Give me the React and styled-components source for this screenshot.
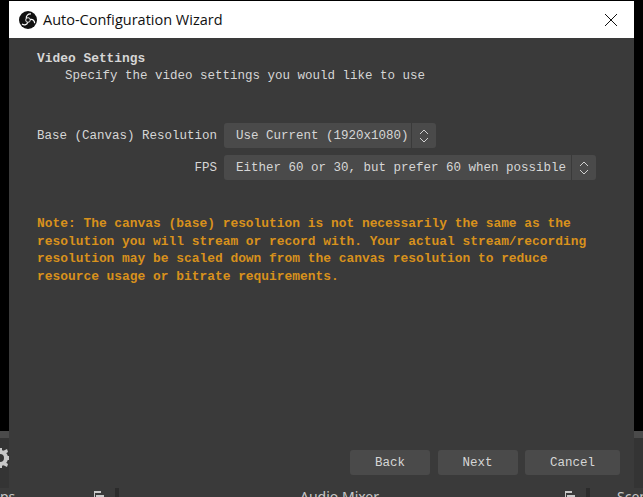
import styled, { createGlobalStyle } from "styled-components";

const Global = createGlobalStyle`
  html, body {
    margin: 0;
    padding: 0;
    background: #000;
  }
`;

const Screen = styled.div`
  position: relative;
  width: 643px;
  height: 497px;
  overflow: hidden;
  background: #000;
`;

// the main OBS window peeking out behind the wizard
const BackWindow = styled.div`
  position: absolute;
  left: 0;
  right: 0;
  top: 431px;
  bottom: 0;
  display: flex;
  flex-direction: column;
`;

const BackToolbar = styled.div`
  height: 57px;
  flex: none;
  background: linear-gradient(#4a4a4a 0 7px, #343434 7px);
  display: flex;
  align-items: center;
`;

const BackDocks = styled.div`
  flex: 1;
  display: flex;
  background: #3a3a3a;
  font: 14px "Noto Sans", sans-serif;
  color: #c8c8c8;
  line-height: 17px;
  white-space: nowrap;
`;

const Dock = styled.div`
  width: ${(p) => p.w}px;
  flex: none;
  display: flex;
  border-right: ${(p) => (p.last ? "none" : "4px solid #2b2b2b")};
  overflow: hidden;
  padding-left: ${(p) => p.pad || 0}px;
  box-sizing: border-box;
`;

const DockTitle = styled.span`
  flex: 1;
`;

const DockAction = styled.span`
  display: flex;
  align-items: flex-start;
  margin-right: 11px;
  margin-top: 3px;
`;

const GearSlot = styled.div`
  margin: 0 0 3px -11px;
  display: flex;
`;

const Window = styled.div`
  position: absolute;
  left: 9px;
  top: 1px;
  width: 625px;
  height: 487px;
  display: flex;
  flex-direction: column;
  background: #3a3a3a;
`;

const TitleBar = styled.div`
  height: 37px;
  flex: none;
  background: #fff;
  display: flex;
  align-items: center;
  padding: 0 0 0 10px;
  color: #111;
  font: 14.5px "Open Sans", sans-serif;
`;

const TitleText = styled.span`
  margin-left: 6px;
  flex: 1;
`;

const CloseButton = styled.div`
  width: 46px;
  height: 37px;
  display: flex;
  align-items: center;
  justify-content: center;
`;

const Body = styled.div`
  flex: 1;
  display: flex;
  flex-direction: column;
  padding: 12px 14px 14px 28px;
  color: #d6d6d6;
  font-family: "Liberation Mono", "DejaVu Sans Mono", monospace;
  font-size: 12.5px;
  line-height: 17px;
`;

const Heading = styled.div`
  font-weight: 700;
  font-size: 12.9px;
  height: 17px;
`;

const SubHeading = styled.div`
  margin-left: 28px;
  margin-top: 1px;
  height: 17px;
`;

const Form = styled.div`
  margin-top: 38px;
  display: grid;
  grid-template-columns: 180px auto;
  column-gap: 7px;
  row-gap: 7px;
  justify-content: start;
  align-items: center;
`;

const Label = styled.div`
  text-align: right;
  white-space: nowrap;
  padding-top: 2px;
`;

const Combo = styled.div`
  justify-self: start;
  width: ${(p) => p.w}px;
  height: 25px;
  display: flex;
  align-items: stretch;
  background: #4a4a4a;
  border-radius: 3px;
`;

const ComboValue = styled.div`
  flex: 1;
  padding: 2px 0 0 12px;
  display: flex;
  align-items: center;
  white-space: nowrap;
`;

const Spinner = styled.div`
  width: 24px;
  flex: none;
  border-left: 1px solid #3a3a3a;
  display: flex;
  align-items: center;
  justify-content: center;
`;

const Note = styled.div`
  margin-top: 35px;
  color: #d8911c;
  font-weight: 700;
  font-size: 12.9px;
  line-height: 17.6px;
  white-space: pre;
`;

const Footer = styled.div`
  margin-top: auto;
  display: flex;
  justify-content: flex-end;
  gap: 7.5px;
  margin-bottom: -1px;
`;

const Button = styled.div`
  width: ${(p) => p.w || 80}px;
  height: 25px;
  padding-top: 2px;
  box-sizing: border-box;
  background: #4a4a4a;
  border-radius: 3px;
  display: flex;
  align-items: center;
  justify-content: center;
`;

const ObsLogo = () => (
  <svg width="18" height="18" viewBox="0 0 18 18" fill="none">
    <circle cx="9" cy="9" r="9" fill="#111" />
    <circle cx="9" cy="9" r="2.3" stroke="#fff" strokeWidth="0.9" />
    <path d="M7.3 7.4C6.9 4.9 9 2.7 12 3" stroke="#fff" strokeWidth="1.2" />
    <path d="M11.2 8.6c2.2-.8 4.3 .8 4.5 3.6" stroke="#fff" strokeWidth="1.2" />
    <path d="M8.6 11.3c-.3 2.2-3 3.4-5.6 1.8" stroke="#fff" strokeWidth="1.2" />
  </svg>
);

const UpDown = () => (
  <svg width="10" height="18" viewBox="0 0 10 18" fill="none" stroke="#d0d0d0" strokeWidth="1">
    <path d="M1 7l4-4 4 4" />
    <path d="M1 11l4 4 4-4" />
  </svg>
);

const Gear = () => (
  <svg width="22" height="22" viewBox="0 0 22 22">
    <circle cx="11" cy="11" r="6" fill="none" stroke="#c8c8c8" strokeWidth="4" />
    <path d="M9 1h4v4H9zM9 17h4v4H9zM17 9h4v4h-4zM1 9h4v4H1zM4 2l4 2-2 3-3-2zM18 2l-4 2 2 3 3-2zM4 20l4-2-2-3-3 2zM18 20l-4-2 2-3 3 2z" fill="#c8c8c8" />
  </svg>
);

const DockIcon = () => (
  <svg width="11" height="9" viewBox="0 0 11 9" fill="#c8c8c8">
    <path d="M1 0h7v2H1zM3 4h8v5H3z" />
    <path d="M1 2h1v4h1v1H1z" />
  </svg>
);

const App = () => (
  <Screen>
    <Global />
    <BackWindow>
      <BackToolbar>
        <GearSlot>
          <Gear />
        </GearSlot>
      </BackToolbar>
      <BackDocks>
        <Dock w={119}>
          <DockTitle>ps</DockTitle>
          <DockAction>
            <DockIcon />
          </DockAction>
        </Dock>
        <Dock w={471} pad={181}>
          <DockTitle>Audio Mixer</DockTitle>
          <DockAction>
            <DockIcon />
          </DockAction>
        </Dock>
        <Dock w={53} pad={27} last>
          Scenes
        </Dock>
      </BackDocks>
    </BackWindow>
    <Window>
      <TitleBar>
        <ObsLogo />
        <TitleText>Auto-Configuration Wizard</TitleText>
        <CloseButton>
          <svg width="14" height="14" viewBox="0 0 14 14" stroke="#111" strokeWidth="1" fill="none">
            <path d="M1 1l12 12M13 1L1 13" />
          </svg>
        </CloseButton>
      </TitleBar>
      <Body>
        <Heading>Video Settings</Heading>
        <SubHeading>Specify the video settings you would like to use</SubHeading>
        <Form>
          <Label>Base (Canvas) Resolution</Label>
          <Combo w={212}>
            <ComboValue>Use Current (1920x1080)</ComboValue>
            <Spinner>
              <UpDown />
            </Spinner>
          </Combo>
          <Label>FPS</Label>
          <Combo w={372}>
            <ComboValue>Either 60 or 30, but prefer 60 when possible</ComboValue>
            <Spinner>
              <UpDown />
            </Spinner>
          </Combo>
        </Form>
        <Note>
          {`Note: The canvas (base) resolution is not necessarily the same as the
resolution you will stream or record with. Your actual stream/recording
resolution may be scaled down from the canvas resolution to reduce
resource usage or bitrate requirements.`}
        </Note>
        <Footer>
          <Button>Back</Button>
          <Button>Next</Button>
          <Button w={95}>Cancel</Button>
        </Footer>
      </Body>
    </Window>
  </Screen>
);

export default App;
